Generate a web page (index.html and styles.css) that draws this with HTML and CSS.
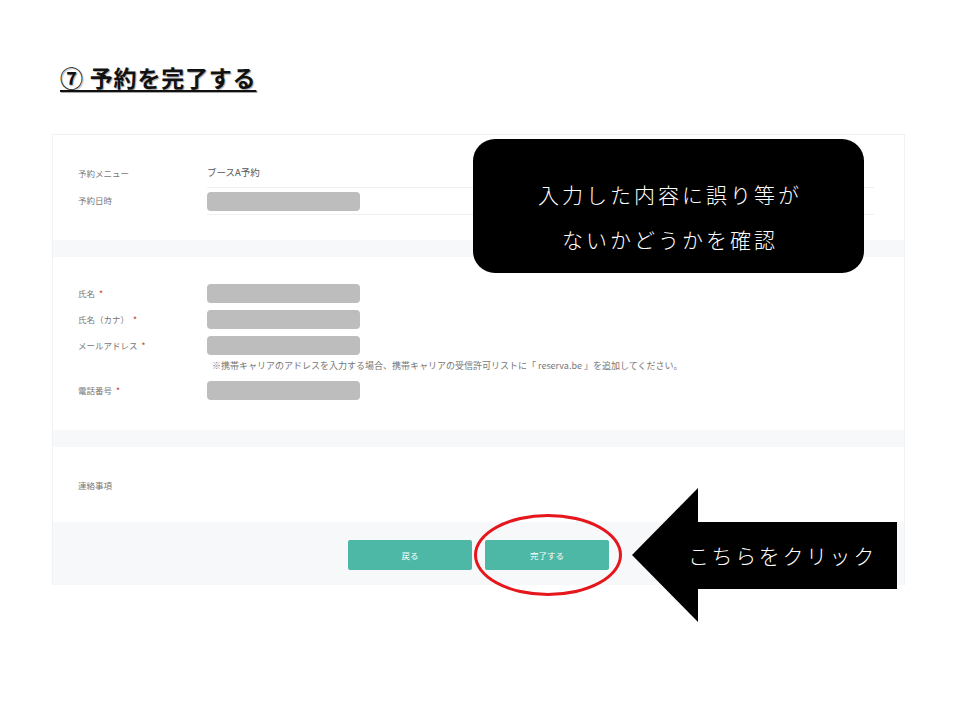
FILE: index.html
```html
<!DOCTYPE html>
<html lang="ja">
<head>
<meta charset="utf-8">
<link rel="stylesheet" href="styles.css">
</head>
<body>
<div class="slide">
  <h1 class="title">⑦ 予約を完了する</h1>
  <div class="panel">
    <section class="sec sec-top">
      <div class="row">
        <div class="label">予約メニュー</div>
        <div class="value line text">ブースA予約</div>
      </div>
      <div class="row">
        <div class="label">予約日時</div>
        <div class="value line"><span class="pill"></span></div>
      </div>
    </section>
    <div class="gap"></div>
    <section class="sec sec-info">
      <div class="row">
        <div class="label">氏名 <span class="req">*</span></div>
        <div class="value"><span class="pill"></span></div>
      </div>
      <div class="row">
        <div class="label">氏名（カナ） <span class="req">*</span></div>
        <div class="value"><span class="pill"></span></div>
      </div>
      <div class="row">
        <div class="label">メールアドレス <span class="req">*</span></div>
        <div class="value"><span class="pill"></span></div>
      </div>
      <div class="note">※携帯キャリアのアドレスを入力する場合、携帯キャリアの受信許可リストに「 reserva.be 」を追加してください。</div>
      <div class="row">
        <div class="label">電話番号 <span class="req">*</span></div>
        <div class="value"><span class="pill"></span></div>
      </div>
    </section>
    <div class="gap"></div>
    <section class="sec sec-note">
      <div class="label">連絡事項</div>
    </section>
    <footer class="actions">
      <button class="btn">戻る</button>
      <button class="btn">完了する</button>
    </footer>
  </div>

  <div class="callout">
    <p>入力した内容に誤り等が</p>
    <p>ないかどうかを確認</p>
  </div>
  <div class="ring"></div>
  <div class="arrow">
    <svg class="arrow-head" width="66" height="134" viewBox="0 0 66 134"><polygon points="66,0 0,67 66,134" fill="#000"/></svg>
    <div class="arrow-body">こちらをクリック</div>
  </div>
</div>
</body>
</html>
```

FILE: styles.css
```css
* { box-sizing: border-box; }
html, body { margin: 0; padding: 0; background: #fff; }
body {
  font-family: "Noto Sans CJK JP", "Noto Sans", sans-serif;
  width: 960px;
  height: 720px;
  overflow: hidden;
}
.slide {
  position: relative;
  width: 960px;
  height: 720px;
  padding-top: 62px;
}
.title {
  margin: 0 0 0 60px;
  display: inline-block;
  font-size: 23px;
  line-height: 31px;
  font-weight: 700;
  color: #111;
  text-decoration: underline;
  text-decoration-thickness: 2px;
  text-underline-offset: 3px;
  text-shadow: 1px 1px 1px rgba(0,0,0,0.35);
  letter-spacing: 0.8px;
}
.panel {
  margin: 41px 0 0 52px;
  width: 853px;
  background: #f7f8fa;
  border: 1px solid #f1f2f4;
  border-bottom: none;
}
.sec {
  background: #fff;
  padding-left: 25px;
  padding-right: 30px;
}
.sec-top { padding-top: 26px; padding-bottom: 25px; }
.gap { height: 17px; }
.sec-info { padding-top: 23px; padding-bottom: 27px; }
.sec-note { height: 75px; display: flex; align-items: center; }
.row {
  display: grid;
  grid-template-columns: 129px 1fr;
  align-items: center;
  height: 26px;
}
.sec-top .row { height: 27px; }
.sec-top .label { padding-bottom: 4px; }
.label {
  font-size: 8.5px;
  color: #777;
}
.req { color: #c0392b; margin-left: 2px; }
.value {
  height: 26px;
  display: flex;
  align-items: center;
  font-size: 9.5px;
  color: #555;
}
.sec-top .value { height: 27px; }
.value.text { padding-bottom: 4px; }
.value.line { border-bottom: 1px solid #eeeff1; }
.pill {
  display: block;
  width: 153px;
  height: 19px;
  border-radius: 4px;
  background: #bdbdbd;
}
.note {
  margin: 1px 0 4px 134px;
  font-size: 9px;
  color: #777;
  line-height: 14px;
}
.actions {
  height: 63px;
  display: flex;
  justify-content: center;
  align-items: center;
  gap: 13px;
  padding-top: 3px;
}
.btn {
  width: 124px;
  height: 30px;
  border: none;
  border-radius: 2px;
  background: #4cb8a5;
  color: #fff;
  font-family: "Noto Sans CJK JP", sans-serif;
  font-size: 8.5px;
  padding: 0;
}
.callout {
  position: absolute;
  left: 473px;
  top: 139px;
  width: 391px;
  height: 134px;
  background: #000;
  border-radius: 22px;
  color: #fff;
  text-align: center;
  padding-top: 33px;
}
.callout p {
  margin: 0;
  font-size: 21px;
  line-height: 45px;
  font-weight: 300;
  letter-spacing: 3px;
  padding-left: 3px;
}
.ring {
  position: absolute;
  left: 474px;
  top: 514px;
  width: 148px;
  height: 82px;
  border: 3px solid #e5161c;
  border-radius: 50%;
}
.arrow {
  position: absolute;
  left: 632px;
  top: 488px;
  display: flex;
  align-items: center;
  height: 134px;
}
.arrow-head { display: block; }
.arrow-body {
  width: 200px;
  height: 67px;
  background: #000;
  color: #fff;
  font-size: 21px;
  font-weight: 300;
  letter-spacing: 2.6px;
  line-height: 67px;
  margin-left: -1px;
  text-indent: -9px;
  white-space: nowrap;
}
```
